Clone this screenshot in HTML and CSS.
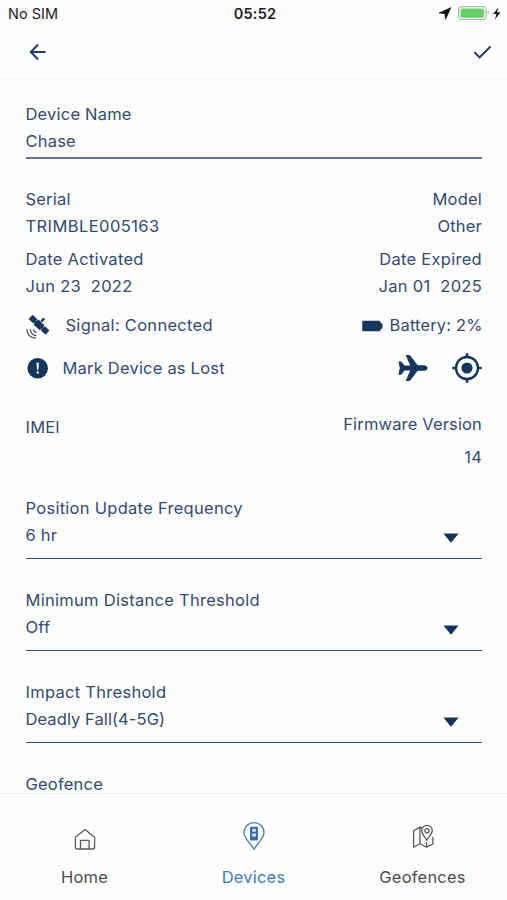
FILE: index.html
```html
<!DOCTYPE html>
<html lang="en">
<head>
<meta charset="utf-8">
<title>Device</title>
<link rel="stylesheet" href="styles.css">
</head>
<body>
<div class="status">
  <span class="carrier">No SIM</span>
  <span class="clock">05:52</span>
  <span class="indicators">
    <svg width="64" height="20" viewBox="0 0 64 20">
      <path d="M13 7.600 1 13 6.800 13.700 7.500 19.500Z" fill="#111" stroke="#111" stroke-width=".6" stroke-linejoin="round"/>
      <rect x="20.6" y="6.600" width="27.600" height="13" rx="3.600" fill="#fff" stroke="#b2b0b3" stroke-width="1.300"/>
      <rect x="22.500" y="8.400" width="23.800" height="9.400" rx="1.800" fill="#69d069"/>
      <path d="M49.800 10.800q2 2.200 0 4.600z" fill="#aaa"/>
      <path d="M60.600 7.200 55.200 14h3.300l-1.700 5.800 5.600-7.600h-3.400z" fill="#111"/>
    </svg>
  </span>
</div>
<header class="topbar">
  <svg width="18" height="18" viewBox="0 0 18 18"><path d="M16.600 9H2M9.100 1.500 1.800 9l7.300 7.500" fill="none" stroke="#243f6b" stroke-width="2"/></svg>
  <svg width="20" height="18" viewBox="0 0 20 18"><path d="M2.500 9.300 7.600 14.400 18.500 3.500" fill="none" stroke="#243a60" stroke-width="2"/></svg>
</header>
<main class="content">
  <section class="field name-field">
    <div><span>Device Name</span></div>
    <div><span>Chase</span></div>
  </section>
  <section class="info">
    <div class="row"><span>Serial</span><span>Model</span></div>
    <div class="row"><span class="serial">TRIMBLE005163</span><span>Other</span></div>
  </section>
  <section class="info dates">
    <div class="row wide"><span>Date Activated</span><span>Date Expired</span></div>
    <div class="row wide"><span>Jun 23&nbsp; 2022</span><span>Jan 01&nbsp; 2025</span></div>
  </section>
  <section class="row signal">
    <div class="group">
      <svg class="sat" width="24" height="24" viewBox="0 0 24 24">
        <g fill="#17345c"><g transform="translate(13 9.800) rotate(43)"><rect x="-11.500" y="-2.900" width="6.600" height="5.800" rx=".7"/><rect x="-4.400" y="-3.500" width="8.800" height="7" rx=".8"/><rect x="5" y="-2.900" width="6.600" height="5.800" rx=".7"/><path d="M-6-1H6V1H-6z"/></g><path d="m14.500 5.500 3-3 1.700 1.700-3 3z"/></g>
        <path d="M7.600 14.200q.2 3 3 3.200M4.300 14.200q.4 5.800 6 6.300M1 14.500q.2 8.300 9 8.700" fill="none" stroke="#38506f" stroke-width="1.300"/>
      </svg>
      <span class="wide">Signal: Connected</span>
    </div>
    <div class="group battery">
      <svg class="batt" width="21" height="12" viewBox="0 0 21 12"><path d="M1.200.7h16q1.200 0 1.200 1.400v.7q2.100.2 2.100 1.400v3.600q0 1.200-2.100 1.400v.7q0 1.400-1.200 1.400h-16Q.2 11.300.2 10V2Q.2.7 1.200.7z" fill="#17345c"/></svg>
      <span>Battery: 2%</span>
    </div>
  </section>
  <section class="row actions">
    <div class="group">
      <svg class="alert" width="22" height="22" viewBox="0 0 22 22"><circle cx="10.700" cy="11.300" r="10.300" fill="#17345c"/><path d="M9.500 5.700h2.400l-.5 7h-1.400z" fill="#fff"/><circle cx="10.700" cy="15.600" r="1.250" fill="#fff"/></svg>
      <span>Mark Device as Lost</span>
    </div>
    <div class="group targets">
      <svg class="plane" width="30" height="28" viewBox="0 0 30 28"><path d="M.4 7.400h2.800l3.300 4.200h5.700L7.700 1h3.200q.9 0 1.500.8l7.300 9.500h7q3 .9 3 2.800t-3 2.700h-7l-7.300 9.400q-.6.800-1.500.8H7.700l4.500-10.400H6.500l-3.300 4.200H.4l1.400-6.700z" fill="#17345c"/></svg>
      <svg width="30" height="30" viewBox="0 0 30 30"><circle cx="15" cy="15" r="11" fill="none" stroke="#17345c" stroke-width="2.400"/><circle cx="15" cy="15" r="5.600" fill="#17345c"/><path d="M15 .3v4M15 25.700v4M.3 15h4M25.700 15h4" stroke="#17345c" stroke-width="2.600"/></svg>
    </div>
  </section>
  <section class="row versions">
    <span class="imei">IMEI</span>
    <div class="firmware"><span>Firmware Version</span><span>14</span></div>
  </section>
  <section class="field select">
    <div class="wide"><span>Position Update Frequency</span></div>
    <div class="value"><span>6 hr</span><svg width="16" height="10" viewBox="0 0 16 10"><path d="M.4.4h15.200L8 9.800z" fill="#12345e"/></svg></div>
  </section>
  <section class="field select">
    <div class="wide"><span>Minimum Distance Threshold</span></div>
    <div class="value"><span>Off</span><svg width="16" height="10" viewBox="0 0 16 10"><path d="M.4.4h15.200L8 9.800z" fill="#12345e"/></svg></div>
  </section>
  <section class="field select">
    <div class="wide"><span>Impact Threshold</span></div>
    <div class="value"><span class="tight">Deadly Fall(4-5G)</span><svg width="16" height="10" viewBox="0 0 16 10"><path d="M.4.4h15.200L8 9.800z" fill="#12345e"/></svg></div>
  </section>
  <section class="field"><div><span>Geofence</span></div></section>
</main>
<nav class="tabs">
  <a class="tab">
    <svg width="24" height="30" viewBox="0 0 24 30"><path d="M2.400 16.200 12 8.500l9.600 7.700v9.800q0 2-2 2H4.400q-2 0-2-2zM7.500 28v-8q0-.6.600-.6h7.400q.6 0 .6.600v8" fill="none" stroke="#5a5a5e" stroke-width="1.300" stroke-linejoin="round"/></svg>
    <span>Home</span>
  </a>
  <a class="tab active">
    <svg width="24" height="30" viewBox="0 0 24 30"><path d="M12 28.300C8.500 22 2 17.700 2 11.500a10 9.900 0 0 1 20 0c0 6.200-6.500 10.500-10 16.800z" fill="none" stroke="#4a80bb" stroke-width="1.300"/><rect x="8.100" y="5.800" width="7.800" height="13.600" rx="1.200" fill="#326ba5"/><path d="M10.300 7.700h3.500v3h-3.500zM10.300 12.500h3.500v3.100h-3.500z" fill="#dce9f5"/></svg>
    <span>Devices</span>
  </a>
  <a class="tab">
    <svg width="24" height="30" viewBox="0 0 24 30"><path d="M10.900 6.800 8.900 6.100 2.600 9.700v16.500l6.300-3.500 6.600 3.500 6.400-3.300v-7M8.900 6.100v16.600M15.500 21v5.200M15.700 19.300c-1.500-3.300-5-5.600-5-9.700a5.300 5.300 0 0 1 10.600 0c0 4.100-4 6.400-5.600 9.700z" fill="none" stroke="#5a5a5e" stroke-width="1.300" stroke-linejoin="round"/><circle cx="16" cy="9.700" r="2.100" fill="none" stroke="#5a5a5e" stroke-width="1.300"/></svg>
    <span>Geofences</span>
  </a>
</nav>
</body>
</html>
```
FILE: styles.css
```css
* { box-sizing: border-box; }
body {
  margin: 0;
  height: 900px;
  display: flex;
  flex-direction: column;
  overflow: hidden;
  background: #fefefe;
  color: #344a6d;
  font: 16.5px/27px Inter, "Liberation Sans", sans-serif;
  letter-spacing: 0.2px;
}
svg { display: block; flex: none; }
.status {
  height: 27px;
  display: grid;
  grid-template-columns: 1fr auto 1fr;
  padding: 0 5px 0 8px;
  color: #1c1c1e;
  font-size: 14.5px;
  letter-spacing: 0;
}
.clock { font-weight: 600; letter-spacing: 0.2px; }
.indicators { justify-self: end; }
.topbar {
  height: 53px;
  padding: 0 15px 2px 29px;
  display: flex;
  align-items: center;
  justify-content: space-between;
  border-bottom: 2px solid #f6f6f7;
}
.content {
  height: 713px;
  flex: none;
  padding: 21px 25px 0 25.5px;
  overflow: hidden;
}
.row, .group, .value { display: flex; align-items: center; }
.row, .value { justify-content: space-between; }
.wide { letter-spacing: 0.28px; }
.serial { letter-spacing: 0.42px; }
.tight { letter-spacing: 0.08px; }
.name-field { height: 57.5px; border-bottom: 2px solid #5d7594; }
.info { margin-top: 27.5px; }
.dates { margin-top: 6px; }
.signal { margin-top: 11px; }
.sat { margin: 4px 16px 0 0; }
.battery { letter-spacing: 0.15px; margin-right: -0.5px; }
.batt { margin: 2px 7px 0 0; }
.actions { margin-top: 14px; height: 30px; }
.alert { margin: 0 14px 0 1px; }
.targets { margin-top: -1px; }
.plane { margin-right: 24px; }
.versions { margin-top: 28px; align-items: flex-start; }
.imei { margin-top: 3px; }
.firmware { display: flex; flex-direction: column; gap: 6px; text-align: right; letter-spacing: 0.15px; }
.select { height: 64px; margin-bottom: 28px; border-bottom: 1px solid #344e6c; }
.versions + .select { margin-top: 24px; }
.value { padding-right: 23px; }
.value svg { margin-top: 5px; }
.tabs {
  height: 107px;
  flex: none;
  display: grid;
  grid-template-columns: repeat(3, 1fr);
  border-top: 1px solid #f0f0f1;
}
.tab {
  display: flex;
  flex-direction: column;
  align-items: center;
  padding-top: 27px;
  gap: 13px;
  color: #4c4c50;
}
.active { color: #427cb8; }
```
